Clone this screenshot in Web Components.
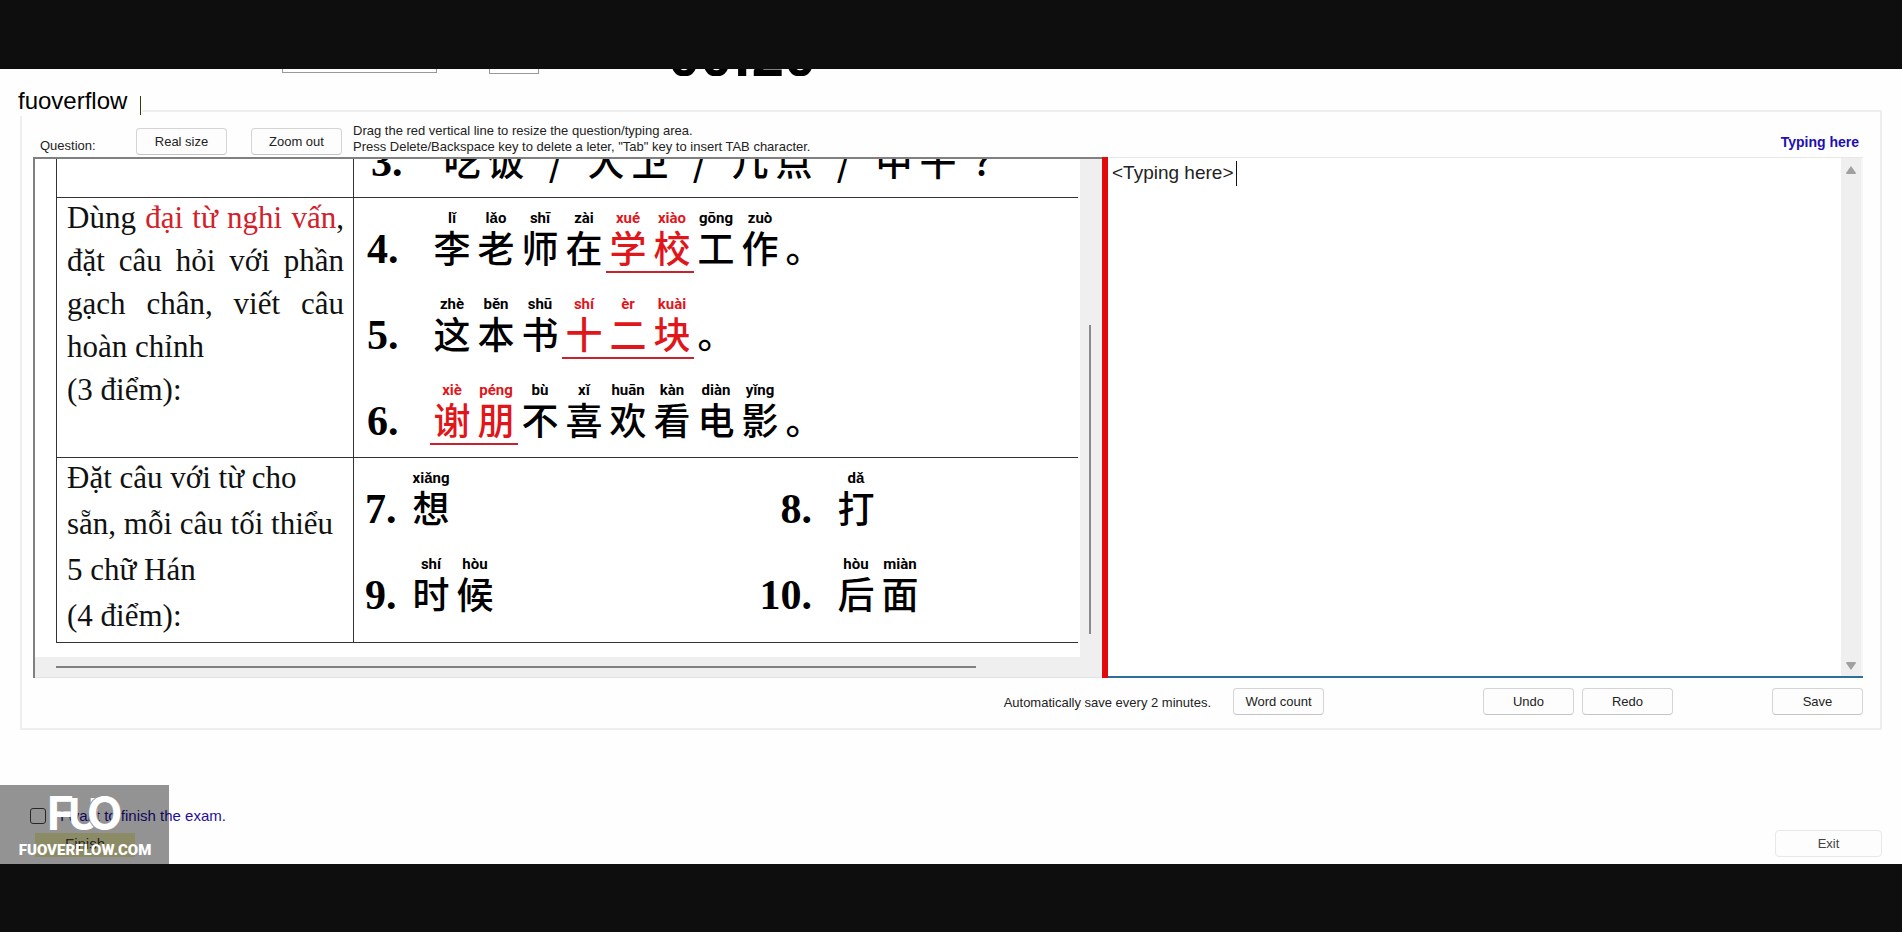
<!DOCTYPE html>
<html lang="vi">
<head>
<meta charset="utf-8">
<title>Exam writing</title>
<style>
html{background:#0e0e0e}
body{margin:0;font:13px/16px "Liberation Sans",Arial,sans-serif;color:#222}
</style>
</head>
<body>
<exam-page></exam-page>
<script>
const define = (name, html, after) => customElements.define(name, class extends HTMLElement {
  connectedCallback() {
    if (this.shadowRoot) return;
    const t = document.createElement('template');
    t.innerHTML = html;
    this.attachShadow({mode: 'open'}).append(t.content.cloneNode(true));
    if (after) after(this, this.shadowRoot);
  }
});

/* Push button with a slotted label */
define('win-button', `
<style>
:host{display:block;width:91px}
button{box-sizing:border-box;display:block;width:100%;height:27px;padding:0;font:inherit;color:#222;background:#fdfdfd;border:1px solid #d4d4d4;border-bottom-color:#c4c4c4;border-radius:4px}
:host([quiet]){width:107px}
:host([quiet]) button{border-color:#e8e8e8;color:#444}
</style>
<button type="button"><slot></slot></button>`);

/* Numbered line of Chinese with pinyin over each character.
   text: "字:pinyin" cells parted by spaces, a leading * marks an underlined cell */
define('hanzi-line', `
<style>
:host{display:flex;box-sizing:border-box;height:86px;padding:12px 0 0 var(--indent,13px);flex:none}
.num{width:var(--num,63px);box-sizing:border-box;padding-top:16px;font:bold 42px/46px "Liberation Serif","Times New Roman",serif;color:#000;flex:none}
:host([end]) .num{text-align:right;padding-right:22px}
.cell{width:44px;text-align:center;color:#000;flex:none}
.cell.w{width:56px}
.py{height:16px;font:bold 15px/16px Roboto,sans-serif}
.zi{height:45px;font:500 37px/42px "Noto Sans CJK SC",sans-serif;border-bottom:2px solid transparent}
.u{color:#e0161b}
.u .zi{border-color:#c8232c}
</style>
<div class="num"></div>`, (host, root) => {
  root.querySelector('.num').textContent = host.getAttribute('num');
  for (const part of host.getAttribute('text').split(' ')) {
    const marked = part.startsWith('*');
    const [zi, py = ''] = part.replace('*', '').split(':');
    const cell = document.createElement('div');
    cell.className = 'cell' + (marked ? ' u' : '') + (zi === '/' ? ' w' : '');
    const top = document.createElement('div');
    top.className = 'py'; top.textContent = py;
    const base = document.createElement('div');
    base.className = 'zi'; base.textContent = zi;
    cell.append(top, base);
    root.append(cell);
  }
});

define('question-view', `
<style>
:host{display:grid;grid-template-columns:minmax(0,1fr) 22px;grid-template-rows:auto 21px;box-sizing:border-box;border-left:2px solid #808080;border-top:2px solid #808080;background:#fff}
.page{overflow:hidden;padding:0 2px 14px 21px}
table{width:100%;border-collapse:collapse;table-layout:fixed;font:31px/43px "Liberation Serif","Times New Roman",serif;color:#111}
td{border:1px solid #333;border-right:0;padding:0;vertical-align:top}
tr:first-child td{border-top:0}
td:first-child{width:297px;box-sizing:border-box}
.clip{height:38px;overflow:hidden;display:flex;align-items:flex-end}
.ask{height:259px;padding:0 9px 0 10px;box-sizing:border-box;line-height:43px}
.ask p{margin:0;text-align:justify}
.ask .full{text-align-last:justify}
.ask p:first-child{line-height:39px;padding-bottom:2px}
.ask.loose{height:184px;line-height:46px}
.ask.loose p{white-space:nowrap}
.ask.loose p:first-child{padding-bottom:4px}
b{font-weight:normal;color:#d3202a}
.pairs{display:grid;grid-template-columns:392px 1fr;padding-bottom:12px}
.v,.h{background:#efefef;display:flex}
.v{align-items:flex-end}
.v i{width:2px;height:62%;margin:0 0 23px 9px;background:#8a8a8a}
.h{grid-column:1/-1;align-items:center;padding-left:21px;border-bottom:1px solid #e2e2e2;box-sizing:border-box}
.h i{height:2px;width:88%;background:#808080}
</style>
<div class="page"><table>
<tr><td></td><td><div class="clip"><hanzi-line num="3." text="吃 饭 / 大 卫 / 几 点 / 中 午 ?" style="--indent:17px;--num:69px"></hanzi-line></div></td></tr>
<tr><td><div class="ask"><p class="full">Dùng <b>đại từ nghi vấn</b>,</p><p class="full">đặt câu hỏi với phần</p><p class="full">gạch chân, viết câu</p><p>hoàn chỉnh</p><p>(3 điểm):</p></div></td>
<td><hanzi-line num="4." text="李:lǐ 老:lǎo 师:shī 在:zài *学:xué *校:xiào 工:gōng 作:zuò 。"></hanzi-line>
<hanzi-line num="5." text="这:zhè 本:běn 书:shū *十:shí *二:èr *块:kuài 。"></hanzi-line>
<hanzi-line num="6." text="*谢:xiè *朋:péng 不:bù 喜:xǐ 欢:huān 看:kàn 电:diàn 影:yǐng 。"></hanzi-line></td></tr>
<tr><td><div class="ask loose"><p>Đặt câu với từ cho</p><p>sẵn, mỗi câu tối thiểu</p><p>5 chữ Hán</p><p>(4 điểm):</p></div></td>
<td><div class="pairs">
<hanzi-line num="7." text="想:xiǎng" style="--indent:11px;--num:44px"></hanzi-line>
<hanzi-line end num="8." text="打:dǎ" style="--indent:0px;--num:88px"></hanzi-line>
<hanzi-line num="9." text="时:shí 候:hòu" style="--indent:11px;--num:44px"></hanzi-line>
<hanzi-line end num="10." text="后:hòu 面:miàn" style="--indent:0px;--num:88px"></hanzi-line>
</div></td></tr>
</table></div>
<div class="v"><i></i></div>
<div class="h"><i></i></div>`);

define('typing-area', `
<style>
:host{display:grid;grid-template-columns:minmax(0,1fr) 22px;position:relative;box-sizing:border-box;border-top:1px solid #e8e8e8;border-bottom:2px solid #2f6f96;background:#fff}
textarea{display:block;box-sizing:border-box;width:100%;height:100%;border:0;outline:0;resize:none;overflow:hidden;padding:3px 4px;background:transparent;color:#222;font:19px/24px "Liberation Sans",Arial,sans-serif}
.caret{position:absolute;left:128px;top:3px;width:1px;height:25px;background:#111}
.bar{background:#efefef;border-right:2px solid #f6f6f6;display:flex;flex-direction:column;justify-content:space-between;align-items:center;padding:8px 0 6px}
</style>
<textarea aria-label="Typing here" spellcheck="false">&lt;Typing here&gt;</textarea><span class="caret"></span>
<div class="bar"><svg width="12" height="8"><path d="M6 0 11 7Q11 8 10 8H2Q1 8 1 7Z" fill="#a0a0a0"/></svg><svg width="12" height="8"><path d="M6 8 11 1Q11 0 10 0H2Q1 0 1 1Z" fill="#a0a0a0"/></svg></div>`);

define('writing-group', `
<style>
:host{display:block;border:2px solid #eee;padding:16px 17px 13px 11px}
header{display:flex;align-items:flex-end;box-sizing:border-box;height:29px;padding:0 0 2px 7px}
.q{width:96px;line-height:16px;padding-bottom:1px}
header win-button{margin-right:24px}
header win-button + win-button{margin-right:11px}
.tip{margin:0;flex:1;align-self:flex-end;line-height:16px}
.here{font-weight:bold;font-size:14px;color:#1d0fb0;padding:0 4px 5px 0}
.split{display:grid;grid-template-columns:minmax(0,1069fr) 6px minmax(0,755fr);align-items:stretch}
.grip{background:#e00a0a}
footer{display:flex;align-items:center;justify-content:flex-end;padding-top:10px}
footer span{margin-right:22px;padding-top:3px}
.undo{margin-left:159px;margin-right:8px}
.save{margin-left:99px}
</style>
<header><span class="q">Question:</span><win-button>Real size</win-button><win-button>Zoom out</win-button>
<p class="tip">Drag the red vertical line to resize the question/typing area.<br>Press Delete/Backspace key to delete a leter, "Tab" key to insert TAB character.</p><span class="here">Typing here</span></header>
<div class="split"><question-view></question-view><div class="grip"></div><typing-area></typing-area></div>
<footer><span>Automatically save every 2 minutes.</span><win-button>Word count</win-button><win-button class="undo">Undo</win-button><win-button>Redo</win-button><win-button class="save">Save</win-button></footer>`);

define('site-mark', `
<style>
:host{display:block;width:169px;height:79px;background:rgba(0,0,0,.42);color:#fff}
svg{display:block}
text{fill:#fff;font-family:Inter,sans-serif;font-weight:700;font-size:46px}
.o{stroke:#959595;stroke-width:2px;paint-order:stroke}
.u{font-size:44px}
.site{font-family:Roboto,sans-serif;font-weight:900;font-size:15px}
</style>
<svg width="169" height="79"><text y="45"><tspan x="47">F</tspan><tspan class="u" x="68">U</tspan><tspan class="o" x="87">O</tspan></text><text class="site" x="85" y="70" text-anchor="middle">FUOVERFLOW.COM</text></svg>`);

define('exam-page', `
<style>
:host{display:block;padding-top:69px}
main{position:relative;background:#fefefe}
.top{display:flex;align-items:flex-end;height:7px;overflow:hidden;padding-left:282px;margin-bottom:34px}
select,input.n{box-sizing:border-box;height:26px;border:1px solid #999;background:#fff;appearance:none}
select{width:155px;margin:0 52px 3px 0}
input.n{width:50px;margin-right:129px;margin-bottom:2px}
.time{font:bold 58px/52px "Liberation Sans",Arial,sans-serif;color:#000;height:46px}
writing-group{margin:0 20px 0 20px}
.tag{position:absolute;left:0;top:14px;width:142px;height:33px;box-sizing:border-box;padding-left:18px;background:#fefefe;color:#000;font-size:24px;line-height:35px}
.tag i{position:absolute;left:140px;top:13px;width:1px;height:19px;background:#3a3a10}
.end{display:flex;justify-content:space-between;height:100px;padding:0 20px 7px 30px;margin-top:27px;align-items:flex-end}
.fin{display:grid;gap:8px;align-self:flex-end}
label{display:flex;align-items:center;gap:14px;color:#1d0f9e;font-size:15px;line-height:18px}
input.c{appearance:none;width:16px;height:16px;margin:0;border:1px solid #444;border-radius:3px;background:#fff}
.go{justify-self:start;width:100px;height:24px;margin-left:5px;border:0;background:#f0f0b0;color:#444;font:15px/20px "Liberation Sans",Arial,sans-serif;padding:0 0 2px}
site-mark{position:absolute;left:0;bottom:0}
</style>
<main>
<div class="top"><select aria-label="Font"></select><input class="n" aria-label="Size"><span class="time">00:20</span></div>
<writing-group></writing-group>
<div class="tag">fuoverflow<i></i></div>
<div class="end"><div class="fin"><label><input type="checkbox" class="c">I want to finish the exam.</label><button type="button" class="go">Finish</button></div><win-button quiet>Exit</win-button></div>
<site-mark></site-mark>
</main>`);
</script>
</body>
</html>
